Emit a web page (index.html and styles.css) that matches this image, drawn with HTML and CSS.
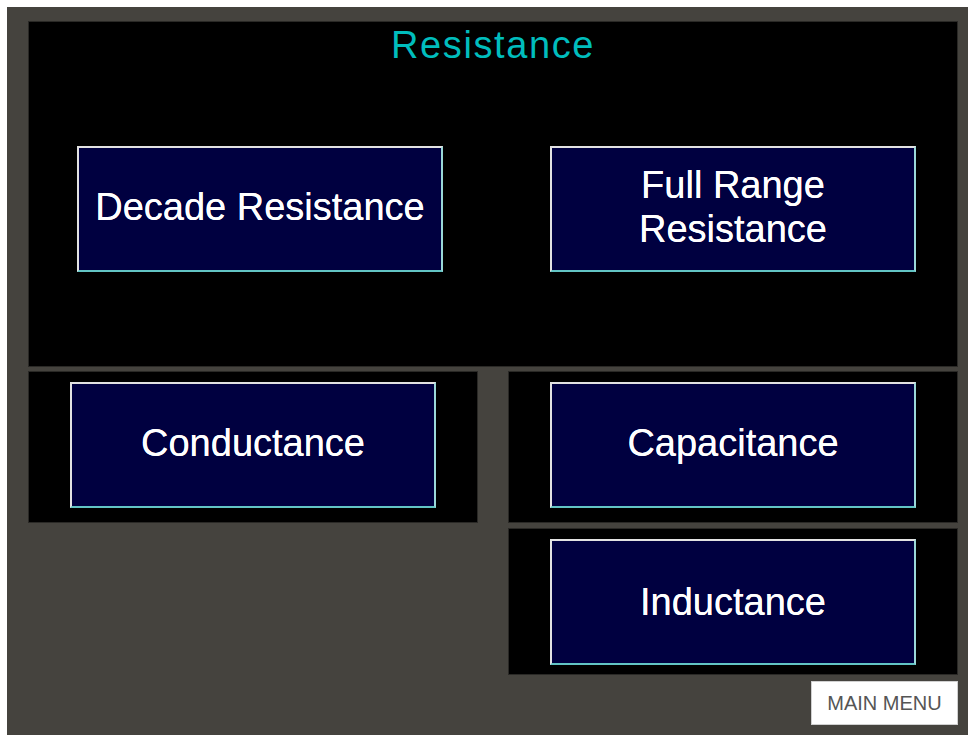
FILE: index.html
```html
<!doctype html>
<html>
<head>
<meta charset="utf-8">
<title>Resistance</title>
<link rel="stylesheet" href="styles.css">
</head>
<body>
<div class="screen">
	<div class="grid">
		<div class="panel panel-top">
			<h1 class="title">Resistance</h1>
			<div class="top-row">
				<button class="key">Decade Resistance</button>
				<button class="key">Full Range<br>Resistance</button>
			</div>
		</div>
		<div class="panel panel-mid">
			<button class="key">Conductance</button>
		</div>
		<div class="panel panel-mid">
			<button class="key">Capacitance</button>
		</div>
		<div class="panel panel-low">
			<button class="key key-even">Inductance</button>
		</div>
	</div>
	<div class="footer">
		<button class="menu">MAIN MENU</button>
	</div>
</div>
</body>
</html>
```

FILE: styles.css
```css
*{ margin: 0; padding: 0; box-sizing: border-box;}
body{ background: #fff; font-family: "Liberation Sans", Arial, sans-serif;}
.screen{ margin: 7px 0 0 7px; width: 961px; height: 728px; background: #45433e; padding: 14px 10px 0 21px;}
.grid{ display: grid; grid-template-columns: 450px 450px; column-gap: 30px; grid-template-rows: 346px 152px 148px; row-gap: 4px;}
.panel{ background: #000; border: 1px solid #2a2926;}
.panel-top{ grid-column: 1 / 3; display: flex; flex-direction: column;}
.panel-mid{ display: flex; justify-content: center; align-items: flex-start; padding-top: 10px;}
.panel-low{ grid-column: 2; margin-top: 1px; display: flex; justify-content: center; align-items: center;}
.title{ color: #00bdbd; font-weight: normal; font-size: 38px; line-height: 44px; letter-spacing: 1.6px; text-align: center; margin-top: 1px;}
.top-row{ display: flex; justify-content: space-between; padding: 0 41px 0 48px; margin-top: 79px;}
.key{ width: 366px; height: 126px; background: #000040; color: #fff; font-family: inherit; font-size: 38px; line-height: 44px; border: 2px solid; border-color: #e2e2e2 #9ad8d8 #62c4c4 #e2e2e2; padding-bottom: 5px; cursor: pointer; text-shadow: 0 0 0.6px #fff;}
.key-even{ padding-bottom: 0;}
.footer{ display: flex; justify-content: flex-end; margin-top: 6px;}
.menu{ width: 147px; height: 44px; background: #fff; border: 1px solid #d0d0d0; color: #555; font-family: inherit; font-size: 20px; cursor: pointer;}
```
